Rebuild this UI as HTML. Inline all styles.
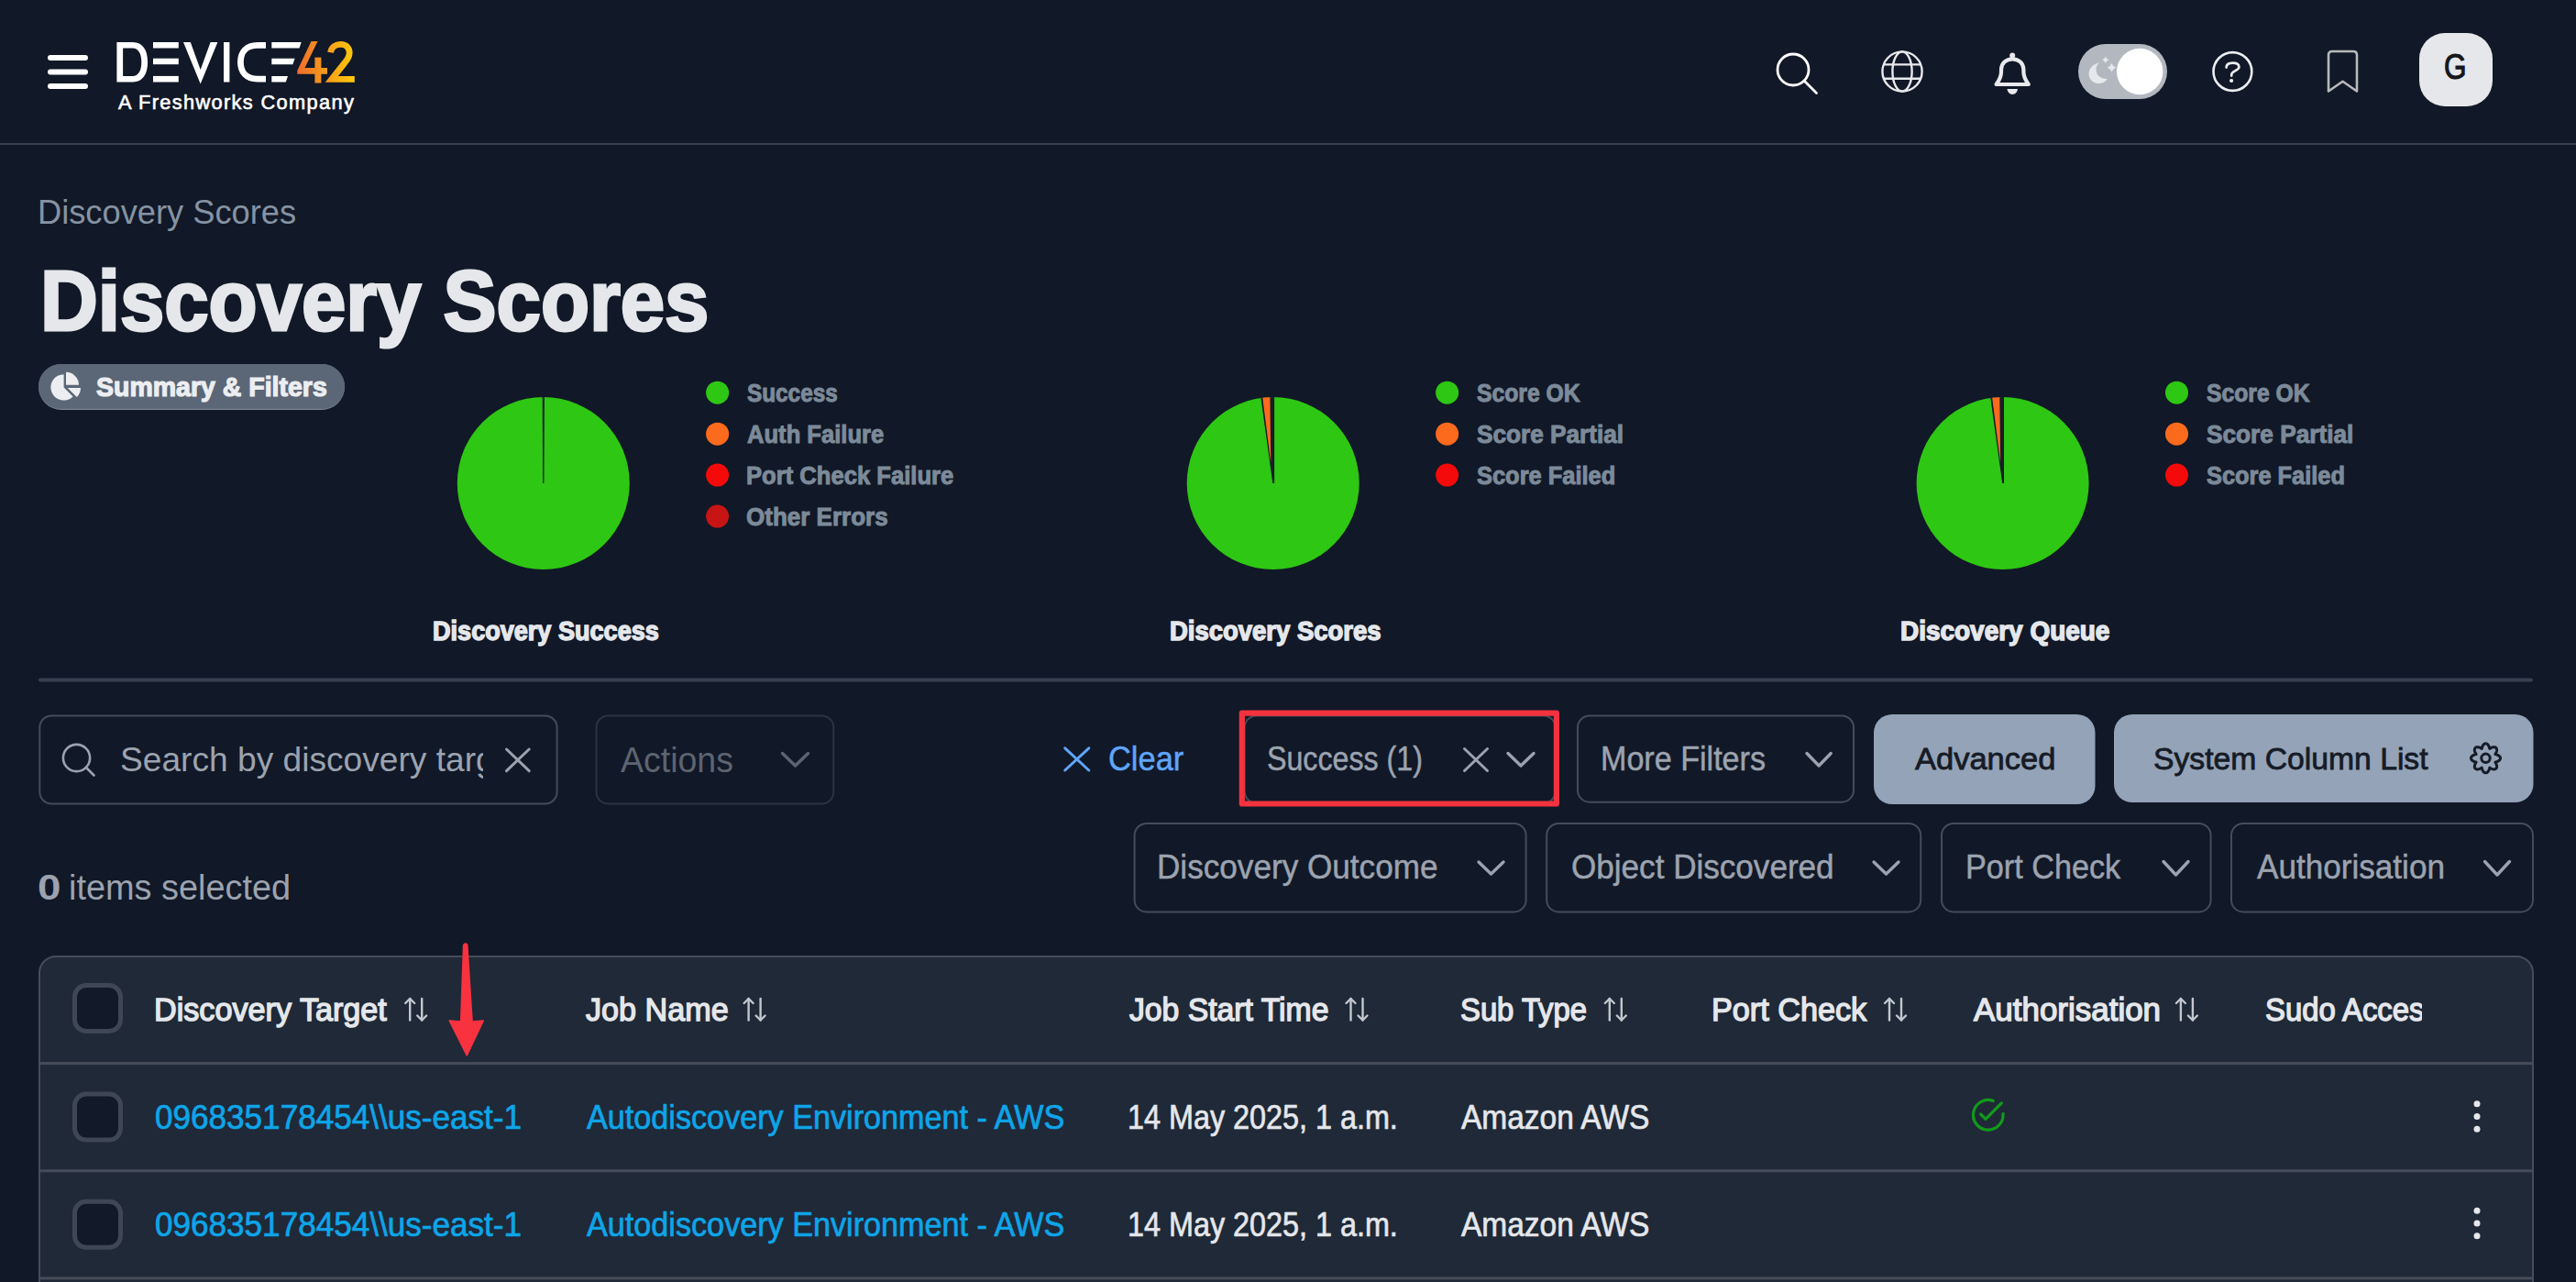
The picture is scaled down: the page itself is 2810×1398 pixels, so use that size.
<!DOCTYPE html>
<html><head><meta charset="utf-8"><style>
html,body{margin:0;padding:0;}
body{width:2810px;height:1398px;overflow:hidden;background:#111827;position:relative;font-family:"Liberation Sans",sans-serif;}
.t{position:absolute;white-space:nowrap;line-height:1;transform-origin:0 0;}
svg{position:absolute;left:0;top:0;}
</style></head><body>
<svg width="2810" height="1398" viewBox="0 0 2810 1398">
<rect x="0" y="156" width="2810" height="2" fill="#374151"/>
<rect x="52" y="60" width="44" height="6" rx="3" fill="#fff"/>
<rect x="52" y="75.5" width="44" height="6" rx="3" fill="#fff"/>
<rect x="52" y="91" width="44" height="6" rx="3" fill="#fff"/>
<g transform="translate(120,40)">
<path fill="#fff" fill-rule="evenodd" d="M7.4,6 H25 C35.5,6 41.1,14.5 41.1,27.75 C41.1,41 35.5,49.5 25,49.5 H7.4 Z M14.1,12.5 V43 H24.5 C31,43 34.3,37 34.3,27.75 C34.3,18.5 31,12.5 24.5,12.5 Z"/>
<rect x="47" y="6" width="27.8" height="6.5" fill="#fff"/>
<rect x="47" y="23.7" width="27.8" height="6.5" fill="#fff"/>
<rect x="47" y="42.9" width="27.8" height="6.6" fill="#fff"/>
<polygon fill="#fff" points="80,6 87.8,6 98.7,36 109.6,6 117.4,6 98.7,51.6"/>
<rect x="124" y="6" width="6.4" height="43.5" fill="#fff"/>
<path fill="none" stroke="#fff" stroke-width="6.8" d="M170,9.4 H161 C148.5,9.4 142.4,17 142.4,27.75 C142.4,38.5 148.5,46.1 161,46.1 H170"/>
<polygon fill="#fff" points="176.3,6 208.7,6 206.5,12.5 176.3,12.5"/>
<polygon fill="#fff" points="176.3,23.7 201.6,23.7 199.4,30.2 176.3,30.2"/>
<polygon fill="#fff" points="176.3,42.9 194,42.9 191.8,49.5 176.3,49.5"/>
<defs><linearGradient id="lg42" x1="204" x2="267" y1="0" y2="0" gradientUnits="userSpaceOnUse"><stop offset="0" stop-color="#ee6c2c"/><stop offset="1" stop-color="#fdcb0a"/></linearGradient></defs>
<polygon fill="url(#lg42)" points="219.5,5 226.5,5 212.5,34 237,34 237,40.8 204.3,40.8 204.3,37"/>
<rect x="223.4" y="22.6" width="7" height="27.9" fill="url(#lg42)"/>
<path fill="none" stroke="url(#lg42)" stroke-width="6.8" stroke-linejoin="miter" d="M240.6,17.2 C241.6,11 246.4,8.4 251.6,8.4 C257.8,8.4 261.2,12.5 261.2,17.6 C261.2,21.6 259,25.2 255.8,28.8 L241.8,46.4 H266.8"/>
</g>
<circle cx="1956" cy="76" r="17" fill="none" stroke="#fff" stroke-width="2.8"/>
<line x1="1968.5" y1="88.5" x2="1981.5" y2="101.5" stroke="#fff" stroke-width="2.8" stroke-linecap="round"/>
<g fill="none" stroke="#e8e9ec" stroke-width="2.4"><circle cx="2075" cy="78" r="21.6"/><ellipse cx="2075" cy="78" rx="10.6" ry="21.6"/><line x1="2055" y1="70.4" x2="2095" y2="70.4"/><line x1="2055" y1="85.7" x2="2095" y2="85.7"/></g>
<path fill="none" stroke="#e8e9ec" stroke-width="4.2" stroke-linejoin="round" d="M2177.6,92 H2212.8 C2209.8,88 2207.4,84.5 2207.4,78.5 V76 C2207.4,69 2202,64.3 2195.2,64.3 C2188.4,64.3 2183,69 2183,76 V78.5 C2183,84.5 2180.6,88 2177.6,92 Z"/>
<circle cx="2195.2" cy="60.6" r="3" fill="#e8e9ec"/>
<path fill="#e8e9ec" d="M2189.5,97 H2201 C2200.5,100.6 2198.2,102.9 2195.25,102.9 C2192.3,102.9 2190,100.6 2189.5,97 Z"/>
<rect x="2267" y="48" width="97" height="60" rx="30" fill="#b3b8c0"/>
<circle cx="2334.2" cy="78" r="25.2" fill="#fff"/>
<path fill="#e6e8eb" d="M2290,68.5 C2282,70 2278.5,76 2278.5,80.5 C2278.5,86.5 2283.5,91 2289.5,91 C2293.5,91 2297,89 2298.8,86 C2292,86.5 2286.5,82 2286.5,76 C2286.5,73 2287.8,70.3 2290,68.5 Z"/>
<path fill="#e6e8eb" d="M2296.8,61.699999999999996 Q2297.7000000000003,64.39999999999999 2300.4,65.3 Q2297.7000000000003,66.2 2296.8,68.89999999999999 Q2295.9,66.2 2293.2000000000003,65.3 Q2295.9,64.39999999999999 2296.8,61.699999999999996 Z"/>
<path fill="#e6e8eb" d="M2303.5,68.8 Q2304.75,72.55 2308.5,73.8 Q2304.75,75.05 2303.5,78.8 Q2302.25,75.05 2298.5,73.8 Q2302.25,72.55 2303.5,68.8 Z"/>
<circle cx="2435.4" cy="78" r="20.9" fill="none" stroke="#eceef1" stroke-width="2.6"/>
<path fill="none" stroke="#eceef1" stroke-width="2.7" stroke-linecap="round" stroke-linejoin="round" d="M2428.6,73.6 C2428.6,70.2 2430.8,68.6 2435.6,68.6 C2440.4,68.6 2442.4,70.6 2442.4,73.2 C2442.4,76.8 2434.2,77.6 2434.2,81.4 V82.6"/>
<circle cx="2434.1" cy="88" r="2.1" fill="#eceef1"/>
<path fill="none" stroke="#b9b9ba" stroke-width="2.6" stroke-linejoin="round" d="M2540,99.5 V60 C2540,57.5 2541.5,56 2544,56 H2567 C2569.5,56 2571,57.5 2571,60 V99.5 L2555.5,88.8 Z"/>
<rect x="2639" y="36" width="80" height="80" rx="28" fill="#e6e7eb"/>
<rect x="42" y="397" width="334" height="50" rx="25" fill="#7b8693"/>
<rect x="42" y="397" width="334" height="48.8" rx="24.4" fill="#5b6676"/>
<path fill="#eceef1" d="M69.6,408.2 V422.4 L79.6,432.4 A14.2,14.2 0 1 1 69.6,408.2 Z"/>
<path fill="#eceef1" d="M72,405.8 A14,14 0 0 1 86,419.8 H72 Z"/>
<path fill="#eceef1" d="M73.7,423 H88 A14.3,14.3 0 0 1 83.8,433.1 Z"/>
<circle cx="592.8" cy="527" r="94" fill="#2ec713"/>
<path fill="#161c29" d="M592.1999999999999,527 L591.6999999999999,432 H593.9 L593.4,527 Z"/>
<circle cx="1388.7" cy="527" r="94" fill="#2ec713"/>
<clipPath id="pc1"><circle cx="1388.7" cy="527" r="94"/></clipPath>
<g clip-path="url(#pc1)">
<path fill="#161c29" d="M1390.1000000000001,527 L1390.1000000000001,430 L1374.9,430 L1388.3,527 Z"/>
<path fill="#fc6a1d" d="M1386.3,505 L1376.8,430 L1385.3500000000001,430 Z"/>
</g>
<circle cx="2184.6" cy="527" r="94" fill="#2ec713"/>
<clipPath id="pc2"><circle cx="2184.6" cy="527" r="94"/></clipPath>
<g clip-path="url(#pc2)">
<path fill="#161c29" d="M2186.0,527 L2186.0,430 L2170.7999999999997,430 L2184.2,527 Z"/>
<path fill="#fc6a1d" d="M2182.2,505 L2172.7,430 L2181.25,430 Z"/>
</g>
<circle cx="782.6" cy="428.20" r="12.5" fill="#2ec713"/>
<circle cx="782.6" cy="473.15" r="12.5" fill="#fc6a1d"/>
<circle cx="782.6" cy="518.10" r="12.5" fill="#f40a0a"/>
<circle cx="782.6" cy="563.05" r="12.5" fill="#c71414"/>
<circle cx="1578.6" cy="428.20" r="12.5" fill="#2ec713"/>
<circle cx="1578.6" cy="473.15" r="12.5" fill="#fc6a1d"/>
<circle cx="1578.6" cy="518.10" r="12.5" fill="#f40a0a"/>
<circle cx="2374.5" cy="428.20" r="12.5" fill="#2ec713"/>
<circle cx="2374.5" cy="473.15" r="12.5" fill="#fc6a1d"/>
<circle cx="2374.5" cy="518.10" r="12.5" fill="#f40a0a"/>
<rect x="42" y="739.5" width="2721" height="4" rx="2" fill="#374151"/>
<rect x="43.3" y="780.5" width="564.3000000000001" height="96.0" rx="13" fill="#111827" stroke="#454c59" stroke-width="2"/>
<rect x="650.5" y="780.5" width="258.79999999999995" height="96.0" rx="13" fill="#111827" stroke="#2c3340" stroke-width="2"/>
<rect x="1357.6" y="780.6" width="339.20000000000005" height="95.19999999999993" rx="13" fill="#111827" stroke="#454c59" stroke-width="2"/>
<rect x="1721.0" y="780.4" width="301" height="94.30000000000007" rx="13" fill="#111827" stroke="#454c59" stroke-width="2"/>
<rect x="2044" y="779" width="241.5" height="98" rx="20" fill="#94a3b8"/>
<rect x="2306" y="779" width="457.5" height="96" rx="20" fill="#94a3b8"/>
<rect x="1237.6" y="898.0" width="427.0" height="96.39999999999998" rx="13" fill="#111827" stroke="#454c59" stroke-width="2"/>
<rect x="1687.2" y="898.0" width="407.9999999999998" height="96.39999999999998" rx="13" fill="#111827" stroke="#454c59" stroke-width="2"/>
<rect x="2118.0" y="898.0" width="293.5999999999999" height="96.39999999999998" rx="13" fill="#111827" stroke="#454c59" stroke-width="2"/>
<rect x="2434.0" y="898.0" width="329" height="96.39999999999998" rx="13" fill="#111827" stroke="#454c59" stroke-width="2"/>
<rect x="1354.8" y="777.7" width="343.1" height="98.8" fill="none" stroke="#f3323f" stroke-width="6.2" stroke-linejoin="round"/>
<g fill="none" stroke="#9ca3af" stroke-width="2.6" stroke-linecap="round"><circle cx="83.5" cy="826.5" r="14.6"/><line x1="94" y1="837" x2="102.5" y2="845.5"/></g>
<g stroke="#9ca3af" stroke-width="3" stroke-linecap="round"><line x1="552.5" y1="817" x2="577.2" y2="840.6"/><line x1="577.2" y1="817" x2="552.5" y2="840.6"/></g>
<g stroke="#60a5fa" stroke-width="3" stroke-linecap="round"><line x1="1161.7" y1="815.8" x2="1187.8" y2="840"/><line x1="1187.8" y1="815.8" x2="1161.7" y2="840"/></g>
<g stroke="#9ca3af" stroke-width="3" stroke-linecap="round"><line x1="1597.5" y1="816.5" x2="1622.5" y2="840.5"/><line x1="1622.5" y1="816.5" x2="1597.5" y2="840.5"/></g>
<polyline points="853.5,821.5 867.5,835 881.5,821.5" fill="none" stroke="#5d6471" stroke-width="3.4" stroke-linecap="round" stroke-linejoin="round"/>
<polyline points="1645,821.5 1659.0,835 1673,821.5" fill="none" stroke="#9ca3af" stroke-width="3.4" stroke-linecap="round" stroke-linejoin="round"/>
<polyline points="1971,821.5 1984.1,835 1997.2,821.5" fill="none" stroke="#9ca3af" stroke-width="3.4" stroke-linecap="round" stroke-linejoin="round"/>
<polyline points="1613,940 1626.5,953 1640,940" fill="none" stroke="#9ca3af" stroke-width="3.4" stroke-linecap="round" stroke-linejoin="round"/>
<polyline points="2044,940 2057.5,953 2071,940" fill="none" stroke="#9ca3af" stroke-width="3.4" stroke-linecap="round" stroke-linejoin="round"/>
<polyline points="2360,939.5 2373.5,954 2387,939.5" fill="none" stroke="#9ca3af" stroke-width="3.4" stroke-linecap="round" stroke-linejoin="round"/>
<polyline points="2710.5,939.5 2724.0,954 2737.5,939.5" fill="none" stroke="#9ca3af" stroke-width="3.4" stroke-linecap="round" stroke-linejoin="round"/>
<polyline points="2711.50,810.80 2712.02,810.85 2712.53,811.01 2713.03,811.28 2713.50,811.63 2713.93,812.08 2714.32,812.60 2714.67,813.18 2714.98,813.82 2715.24,814.49 2715.45,815.17 2715.63,815.84 2715.79,816.45 2716.33,816.13 2716.93,815.78 2717.57,815.45 2718.22,815.16 2718.88,814.93 2719.54,814.76 2720.19,814.67 2720.81,814.66 2721.40,814.74 2721.93,814.91 2722.41,815.16 2722.81,815.49 2723.14,815.89 2723.39,816.37 2723.56,816.90 2723.64,817.49 2723.63,818.11 2723.54,818.76 2723.37,819.42 2723.14,820.08 2722.85,820.73 2722.52,821.37 2722.17,821.97 2721.85,822.51 2722.46,822.67 2723.13,822.85 2723.81,823.06 2724.48,823.32 2725.12,823.63 2725.70,823.98 2726.22,824.37 2726.67,824.80 2727.02,825.27 2727.29,825.77 2727.45,826.28 2727.50,826.80 2727.45,827.32 2727.29,827.83 2727.02,828.33 2726.67,828.80 2726.22,829.23 2725.70,829.62 2725.12,829.97 2724.48,830.28 2723.81,830.54 2723.13,830.75 2722.46,830.93 2721.85,831.09 2722.17,831.63 2722.52,832.23 2722.85,832.87 2723.14,833.52 2723.37,834.18 2723.54,834.84 2723.63,835.49 2723.64,836.11 2723.56,836.70 2723.39,837.23 2723.14,837.71 2722.81,838.11 2722.41,838.44 2721.93,838.69 2721.40,838.86 2720.81,838.94 2720.19,838.93 2719.54,838.84 2718.88,838.67 2718.22,838.44 2717.57,838.15 2716.93,837.82 2716.33,837.47 2715.79,837.15 2715.63,837.76 2715.45,838.43 2715.24,839.11 2714.98,839.78 2714.67,840.42 2714.32,841.00 2713.93,841.52 2713.50,841.97 2713.03,842.32 2712.53,842.59 2712.02,842.75 2711.50,842.80 2710.98,842.75 2710.47,842.59 2709.97,842.32 2709.50,841.97 2709.07,841.52 2708.68,841.00 2708.33,840.42 2708.02,839.78 2707.76,839.11 2707.55,838.43 2707.37,837.76 2707.21,837.15 2706.67,837.47 2706.07,837.82 2705.43,838.15 2704.78,838.44 2704.12,838.67 2703.46,838.84 2702.81,838.93 2702.19,838.94 2701.60,838.86 2701.07,838.69 2700.59,838.44 2700.19,838.11 2699.86,837.71 2699.61,837.23 2699.44,836.70 2699.36,836.11 2699.37,835.49 2699.46,834.84 2699.63,834.18 2699.86,833.52 2700.15,832.87 2700.48,832.23 2700.83,831.63 2701.15,831.09 2700.54,830.93 2699.87,830.75 2699.19,830.54 2698.52,830.28 2697.88,829.97 2697.30,829.62 2696.78,829.23 2696.33,828.80 2695.98,828.33 2695.71,827.83 2695.55,827.32 2695.50,826.80 2695.55,826.28 2695.71,825.77 2695.98,825.27 2696.33,824.80 2696.78,824.37 2697.30,823.98 2697.88,823.63 2698.52,823.32 2699.19,823.06 2699.87,822.85 2700.54,822.67 2701.15,822.51 2700.83,821.97 2700.48,821.37 2700.15,820.73 2699.86,820.08 2699.63,819.42 2699.46,818.76 2699.37,818.11 2699.36,817.49 2699.44,816.90 2699.61,816.37 2699.86,815.89 2700.19,815.49 2700.59,815.16 2701.07,814.91 2701.60,814.74 2702.19,814.66 2702.81,814.67 2703.46,814.76 2704.12,814.93 2704.78,815.16 2705.43,815.45 2706.07,815.78 2706.67,816.13 2707.21,816.45 2707.37,815.84 2707.55,815.17 2707.76,814.49 2708.02,813.82 2708.33,813.18 2708.68,812.60 2709.07,812.08 2709.50,811.63 2709.97,811.28 2710.47,811.01 2710.98,810.85 2711.50,810.80" fill="none" stroke="#161b26" stroke-width="3" stroke-linejoin="round"/>
<circle cx="2711.5" cy="826.8" r="4.7" fill="none" stroke="#161b26" stroke-width="3"/>
<path d="M42,1398 V1061 A19,19 0 0 1 61,1042 H2745 A19,19 0 0 1 2764,1061 V1398 H42 Z" fill="#1f2937"/>
<path d="M43,1398 V1061 A18,18 0 0 1 61,1043 H2745 A18,18 0 0 1 2763,1061 V1398" fill="none" stroke="#464d59" stroke-width="2"/>
<rect x="43" y="1158.1" width="2720" height="3" fill="#464d59"/>
<rect x="43" y="1275.3" width="2720" height="3" fill="#464d59"/>
<rect x="43" y="1392.4" width="2720" height="3" fill="#464d59"/>
<rect x="81.5" y="1074.5" width="50" height="50" rx="12.5" fill="#121a2a" stroke="#3f4754" stroke-width="5"/>
<rect x="81.5" y="1193.1" width="50" height="50" rx="12.5" fill="#121a2a" stroke="#3f4754" stroke-width="5"/>
<rect x="81.5" y="1310.3" width="50" height="50" rx="12.5" fill="#121a2a" stroke="#3f4754" stroke-width="5"/>
<g fill="none" stroke="#c3c7ce" stroke-width="2.4" stroke-linecap="round" stroke-linejoin="round"><line x1="447.2" y1="1089" x2="447.2" y2="1112.5"/><polyline points="442.2,1094 447.2,1089 452.2,1094"/><line x1="460.2" y1="1089" x2="460.2" y2="1112.5"/><polyline points="455.2,1107.5 460.2,1112.5 465.2,1107.5"/></g>
<g fill="none" stroke="#c3c7ce" stroke-width="2.4" stroke-linecap="round" stroke-linejoin="round"><line x1="816.5999999999999" y1="1089" x2="816.5999999999999" y2="1112.5"/><polyline points="811.5999999999999,1094 816.5999999999999,1089 821.5999999999999,1094"/><line x1="829.5999999999999" y1="1089" x2="829.5999999999999" y2="1112.5"/><polyline points="824.5999999999999,1107.5 829.5999999999999,1112.5 834.5999999999999,1107.5"/></g>
<g fill="none" stroke="#c3c7ce" stroke-width="2.4" stroke-linecap="round" stroke-linejoin="round"><line x1="1473.5" y1="1089" x2="1473.5" y2="1112.5"/><polyline points="1468.5,1094 1473.5,1089 1478.5,1094"/><line x1="1486.5" y1="1089" x2="1486.5" y2="1112.5"/><polyline points="1481.5,1107.5 1486.5,1112.5 1491.5,1107.5"/></g>
<g fill="none" stroke="#c3c7ce" stroke-width="2.4" stroke-linecap="round" stroke-linejoin="round"><line x1="1755.8" y1="1089" x2="1755.8" y2="1112.5"/><polyline points="1750.8,1094 1755.8,1089 1760.8,1094"/><line x1="1768.8" y1="1089" x2="1768.8" y2="1112.5"/><polyline points="1763.8,1107.5 1768.8,1112.5 1773.8,1107.5"/></g>
<g fill="none" stroke="#c3c7ce" stroke-width="2.4" stroke-linecap="round" stroke-linejoin="round"><line x1="2061.0" y1="1089" x2="2061.0" y2="1112.5"/><polyline points="2056.0,1094 2061.0,1089 2066.0,1094"/><line x1="2074.0" y1="1089" x2="2074.0" y2="1112.5"/><polyline points="2069.0,1107.5 2074.0,1112.5 2079.0,1107.5"/></g>
<g fill="none" stroke="#c3c7ce" stroke-width="2.4" stroke-linecap="round" stroke-linejoin="round"><line x1="2378.9" y1="1089" x2="2378.9" y2="1112.5"/><polyline points="2373.9,1094 2378.9,1089 2383.9,1094"/><line x1="2391.9" y1="1089" x2="2391.9" y2="1112.5"/><polyline points="2386.9,1107.5 2391.9,1112.5 2396.9,1107.5"/></g>
<g fill="none" stroke="#119a1b" stroke-width="3.2" stroke-linecap="round" stroke-linejoin="round"><path d="M2174.3,1200.5 A16.3,16.3 0 1 0 2185,1214.5"/><polyline points="2160.6,1215 2166,1220.3 2183.3,1203"/></g>
<circle cx="2702" cy="1203.7" r="3.5" fill="#e5e7eb"/>
<circle cx="2702" cy="1217.5" r="3.5" fill="#e5e7eb"/>
<circle cx="2702" cy="1231.3" r="3.5" fill="#e5e7eb"/>
<circle cx="2702" cy="1320.2" r="3.5" fill="#e5e7eb"/>
<circle cx="2702" cy="1334" r="3.5" fill="#e5e7eb"/>
<circle cx="2702" cy="1347.8" r="3.5" fill="#e5e7eb"/>
</svg>
<div class="t" style="left:128.50px;top:100.52px;font-size:21.59px;color:#ffffff;font-weight:400;transform:scaleX(1.0121);-webkit-text-stroke:0.6px #ffffff;letter-spacing:1.3px;">A Freshworks Company</div>
<div class="t" style="left:2665.91px;top:54.32px;font-size:38.84px;color:#15171c;font-weight:400;transform:scaleX(0.8108);-webkit-text-stroke:1.2px #15171c;">G</div>
<div class="t" style="left:40.90px;top:213.40px;font-size:37.68px;color:#8593a3;font-weight:400;transform:scaleX(0.9625);">Discovery Scores</div>
<div class="t" style="left:43.65px;top:281.74px;font-size:93.04px;color:#e5e7eb;font-weight:700;transform:scaleX(0.9341);-webkit-text-stroke:3px #e5e7eb;">Discovery Scores</div>
<div class="t" style="left:104.83px;top:407.00px;font-size:29.42px;color:#eceef1;font-weight:700;transform:scaleX(0.9689);-webkit-text-stroke:1.2px #eceef1;">Summary &amp; Filters</div>
<div class="t" style="left:814.71px;top:415.17px;font-size:27.68px;color:#7c8a99;font-weight:700;transform:scaleX(0.8793);-webkit-text-stroke:1px #7c8a99;">Success</div>
<div class="t" style="left:814.82px;top:460.17px;font-size:27.68px;color:#7c8a99;font-weight:700;transform:scaleX(0.9246);-webkit-text-stroke:1px #7c8a99;">Auth Failure</div>
<div class="t" style="left:813.80px;top:505.17px;font-size:27.68px;color:#7c8a99;font-weight:700;transform:scaleX(0.9255);-webkit-text-stroke:1px #7c8a99;">Port Check Failure</div>
<div class="t" style="left:814.43px;top:550.17px;font-size:27.68px;color:#7c8a99;font-weight:700;transform:scaleX(0.9397);-webkit-text-stroke:1px #7c8a99;">Other Errors</div>
<div class="t" style="left:1611.00px;top:415.17px;font-size:27.68px;color:#7c8a99;font-weight:700;transform:scaleX(0.8938);-webkit-text-stroke:1px #7c8a99;">Score OK</div>
<div class="t" style="left:1610.99px;top:460.17px;font-size:27.68px;color:#7c8a99;font-weight:700;transform:scaleX(0.9463);-webkit-text-stroke:1px #7c8a99;">Score Partial</div>
<div class="t" style="left:1611.00px;top:505.17px;font-size:27.68px;color:#7c8a99;font-weight:700;transform:scaleX(0.9188);-webkit-text-stroke:1px #7c8a99;">Score Failed</div>
<div class="t" style="left:2407.00px;top:415.17px;font-size:27.68px;color:#7c8a99;font-weight:700;transform:scaleX(0.8930);-webkit-text-stroke:1px #7c8a99;">Score OK</div>
<div class="t" style="left:2406.99px;top:460.17px;font-size:27.68px;color:#7c8a99;font-weight:700;transform:scaleX(0.9475);-webkit-text-stroke:1px #7c8a99;">Score Partial</div>
<div class="t" style="left:2407.00px;top:505.17px;font-size:27.68px;color:#7c8a99;font-weight:700;transform:scaleX(0.9169);-webkit-text-stroke:1px #7c8a99;">Score Failed</div>
<div class="t" style="left:472.00px;top:674.01px;font-size:28.70px;color:#e5e7eb;font-weight:700;transform:scaleX(0.9437);-webkit-text-stroke:1.4px #e5e7eb;">Discovery Success</div>
<div class="t" style="left:1275.88px;top:674.01px;font-size:28.70px;color:#e5e7eb;font-weight:700;transform:scaleX(0.9570);-webkit-text-stroke:1.4px #e5e7eb;">Discovery Scores</div>
<div class="t" style="left:2072.86px;top:674.01px;font-size:28.70px;color:#e5e7eb;font-weight:700;transform:scaleX(0.9744);-webkit-text-stroke:1.4px #e5e7eb;">Discovery Queue</div>
<div style="position:absolute;left:0;top:0;width:527px;height:1398px;overflow:hidden"><div class="t" style="left:131.13px;top:809.63px;font-size:37.54px;color:#9ca3af;font-weight:400;transform:scaleX(0.9895);">Search by discovery target</div></div>
<div class="t" style="left:677.40px;top:808.88px;font-size:39.13px;color:#5d6471;font-weight:400;transform:scaleX(0.9576);">Actions</div>
<div class="t" style="left:1209.11px;top:808.74px;font-size:37.10px;color:#60a5fa;font-weight:400;transform:scaleX(0.9287);-webkit-text-stroke:0.5px #60a5fa;">Clear</div>
<div class="t" style="left:1382.17px;top:808.74px;font-size:37.10px;color:#9ca3af;font-weight:400;transform:scaleX(0.8678);-webkit-text-stroke:0.5px #9ca3af;">Success (1)</div>
<div class="t" style="left:1745.80px;top:808.74px;font-size:37.10px;color:#9ca3af;font-weight:400;transform:scaleX(0.9197);-webkit-text-stroke:0.5px #9ca3af;">More Filters</div>
<div class="t" style="left:2089.11px;top:811.09px;font-size:33.91px;color:#161b26;font-weight:400;transform:scaleX(1.0171);-webkit-text-stroke:0.8px #161b26;">Advanced</div>
<div class="t" style="left:2348.58px;top:811.09px;font-size:33.91px;color:#161b26;font-weight:400;transform:scaleX(0.9937);-webkit-text-stroke:0.8px #161b26;">System Column List</div>
<div class="t" style="left:1262.42px;top:927.14px;font-size:37.10px;color:#9ca3af;font-weight:400;transform:scaleX(0.9475);-webkit-text-stroke:0.5px #9ca3af;">Discovery Outcome</div>
<div class="t" style="left:1713.96px;top:927.14px;font-size:37.10px;color:#9ca3af;font-weight:400;transform:scaleX(0.9461);-webkit-text-stroke:0.5px #9ca3af;">Object Discovered</div>
<div class="t" style="left:2144.39px;top:927.14px;font-size:37.10px;color:#9ca3af;font-weight:400;transform:scaleX(0.9221);-webkit-text-stroke:0.5px #9ca3af;">Port Check</div>
<div class="t" style="left:2461.54px;top:927.14px;font-size:37.10px;color:#9ca3af;font-weight:400;transform:scaleX(0.9470);-webkit-text-stroke:0.5px #9ca3af;">Authorisation</div>
<div class="t" style="left:41.17px;top:948.79px;font-size:38.41px;color:#9ca3af;font-weight:700;transform:scaleX(1.1895);">0</div>
<div class="t" style="left:75.04px;top:948.79px;font-size:38.41px;color:#9ca3af;font-weight:400;transform:scaleX(0.9866);">items selected</div>
<div class="t" style="left:168.34px;top:1082.87px;font-size:35.36px;color:#e5e7eb;font-weight:400;transform:scaleX(0.9664);-webkit-text-stroke:1.4px #e5e7eb;">Discovery Target</div>
<div class="t" style="left:639.26px;top:1082.87px;font-size:35.36px;color:#e5e7eb;font-weight:400;transform:scaleX(0.9660);-webkit-text-stroke:1.4px #e5e7eb;">Job Name</div>
<div class="t" style="left:1232.46px;top:1082.87px;font-size:35.36px;color:#e5e7eb;font-weight:400;transform:scaleX(0.9538);-webkit-text-stroke:1.4px #e5e7eb;">Job Start Time</div>
<div class="t" style="left:1593.17px;top:1082.87px;font-size:35.36px;color:#e5e7eb;font-weight:400;transform:scaleX(0.9277);-webkit-text-stroke:1.4px #e5e7eb;">Sub Type</div>
<div class="t" style="left:1867.34px;top:1082.87px;font-size:35.36px;color:#e5e7eb;font-weight:400;transform:scaleX(0.9669);-webkit-text-stroke:1.4px #e5e7eb;">Port Check</div>
<div class="t" style="left:2152.59px;top:1082.87px;font-size:35.36px;color:#e5e7eb;font-weight:400;transform:scaleX(0.9886);-webkit-text-stroke:1.4px #e5e7eb;">Authorisation</div>
<div style="position:absolute;left:0;top:0;width:2642px;height:1398px;overflow:hidden"><div class="t" style="left:2470.87px;top:1082.87px;font-size:35.36px;color:#e5e7eb;font-weight:400;transform:scaleX(0.9286);-webkit-text-stroke:1.4px #e5e7eb;">Sudo Access</div></div>
<div class="t" style="left:169.33px;top:1200.56px;font-size:36.38px;color:#0ea5e9;font-weight:400;transform:scaleX(0.9648);-webkit-text-stroke:0.7px #0ea5e9;">096835178454\\us-east-1</div>
<div class="t" style="left:639.73px;top:1200.56px;font-size:36.38px;color:#0ea5e9;font-weight:400;transform:scaleX(0.9398);-webkit-text-stroke:0.7px #0ea5e9;">Autodiscovery Environment - AWS</div>
<div class="t" style="left:1230.19px;top:1200.56px;font-size:36.38px;color:#e5e7eb;font-weight:400;transform:scaleX(0.8891);-webkit-text-stroke:0.7px #e5e7eb;">14 May 2025, 1 a.m.</div>
<div class="t" style="left:1594.32px;top:1200.56px;font-size:36.38px;color:#e5e7eb;font-weight:400;transform:scaleX(0.9205);-webkit-text-stroke:0.7px #e5e7eb;">Amazon AWS</div>
<div class="t" style="left:169.33px;top:1318.06px;font-size:36.38px;color:#0ea5e9;font-weight:400;transform:scaleX(0.9648);-webkit-text-stroke:0.7px #0ea5e9;">096835178454\\us-east-1</div>
<div class="t" style="left:639.73px;top:1318.06px;font-size:36.38px;color:#0ea5e9;font-weight:400;transform:scaleX(0.9398);-webkit-text-stroke:0.7px #0ea5e9;">Autodiscovery Environment - AWS</div>
<div class="t" style="left:1230.19px;top:1318.06px;font-size:36.38px;color:#e5e7eb;font-weight:400;transform:scaleX(0.8891);-webkit-text-stroke:0.7px #e5e7eb;">14 May 2025, 1 a.m.</div>
<div class="t" style="left:1594.32px;top:1318.06px;font-size:36.38px;color:#e5e7eb;font-weight:400;transform:scaleX(0.9205);-webkit-text-stroke:0.7px #e5e7eb;">Amazon AWS</div>
<svg width="2810" height="1398" viewBox="0 0 2810 1398" style="pointer-events:none">
<path fill="#f93240" stroke="#f93240" stroke-width="1.5" stroke-linejoin="round" d="M505.6,1030.5 Q507.7,1027.5 509.8,1030.5 L515.1,1113.9 L527.3,1112.9 L509.3,1151 L490.2,1112.9 L502.7,1113.9 Z"/>
</svg>
</body></html>
